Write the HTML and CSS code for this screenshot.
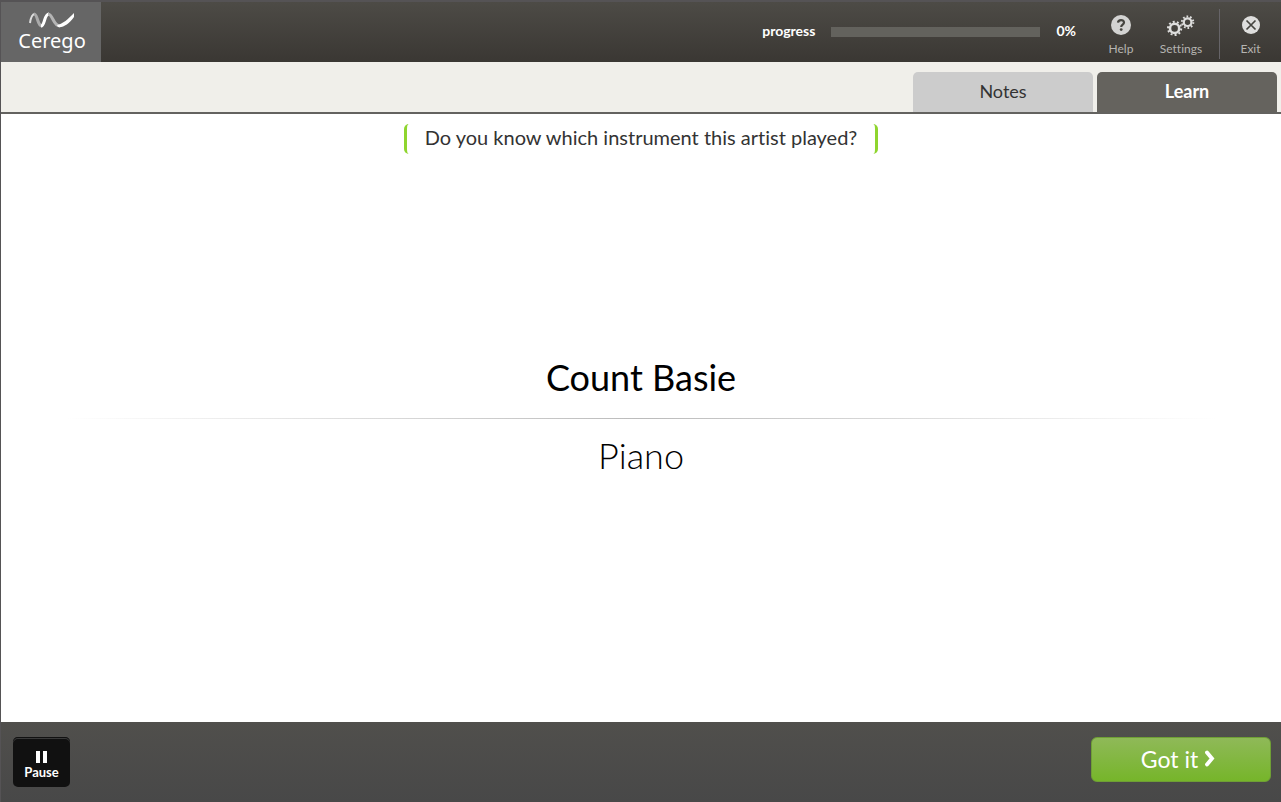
FILE: index.html
```
<!DOCTYPE html>
<html lang="en">
<head>
  <meta charset="UTF-8">
  <meta name="viewport" content="width=device-width, initial-scale=1.0">
  <title>Cerego</title>
  <link rel="stylesheet" href="styles.css">
</head>
<body>
  <header class="topbar">
    <a class="logo" href="#">
      <svg width="46" height="16" viewBox="0 0 46 16" fill="none" aria-hidden="true">
        <path d="M1 11C2 4 4 2 6 2" stroke="#ddd" stroke-width="2"/>
        <path d="M5 2C9 2 8 14 13 14" stroke="#aaa" stroke-width="3"/>
        <path d="M12 14C16 14 15 2 20 2" stroke="#fff" stroke-width="3"/>
        <path d="M19 2C24 2 24 14 31 14" stroke="#b4b4b4" stroke-width="3"/>
        <path d="M28 13C34 12 39 7 45 1V5C40 12 34 16 29 15Z" fill="#fff"/>
      </svg>
      <span>Cerego</span>
    </a>
    <div class="progress">
      <label for="progress">progress</label>
      <progress id="progress" value="0" max="100"></progress>
      <span class="percent">0%</span>
    </div>
    <nav class="tools">
      <a class="tool" href="#">
        <svg width="20" height="20" viewBox="0 0 20 20" aria-hidden="true">
          <circle cx="10" cy="10" r="10" fill="#d3d3d2"/>
          <path d="M7 7.6C7.2 4.2 13 4.2 13 7.6C13 9.6 10.2 9.6 10.2 12" fill="none" stroke="#45443f" stroke-width="2.2"/>
          <circle cx="10.2" cy="14.6" r="1.4" fill="#45443f"/>
        </svg>
        <span>Help</span>
      </a>
      <a class="tool" href="#">
        <svg width="28" height="22" viewBox="0 0 28 22" fill="none" stroke="#dededd" aria-hidden="true">
          <circle cx="7.6" cy="13.4" r="4.6" stroke-width="2.6"/>
          <circle cx="7.6" cy="13.4" r="6.6" stroke-width="2" stroke-dasharray="2 2.147"/>
          <circle cx="20.6" cy="7.2" r="3.8" stroke-width="2.2"/>
          <circle cx="20.6" cy="7.2" r="5.7" stroke-width="2" stroke-dasharray="1.7 1.881"/>
        </svg>
        <span>Settings</span>
      </a>
      <a class="tool exit" href="#">
        <svg width="18" height="18" viewBox="0 0 18 18" aria-hidden="true">
          <circle cx="9" cy="9" r="9" fill="#dededd"/>
          <path d="M4.5 4.5L13.5 13.5M13.5 4.5L4.5 13.5" stroke="#45443f" stroke-width="1.7"/>
        </svg>
        <span>Exit</span>
      </a>
    </nav>
  </header>

  <div class="tabs">
    <button type="button" class="tab">Notes</button>
    <button type="button" class="tab active">Learn</button>
  </div>

  <main class="card">
    <section class="front">
      <p class="question">Do you know which instrument this artist played?</p>
      <h1 class="name">Count Basie</h1>
    </section>
    <hr class="divider">
    <section class="back">
      <p class="answer">Piano</p>
    </section>
  </main>

  <footer class="bottombar">
    <button type="button" class="pause">
      <svg width="11" height="12" viewBox="0 0 11 12" fill="#fff" aria-hidden="true">
        <path d="M0 0H4V12H0ZM7 0H11V12H7Z"/>
      </svg>
      <span>Pause</span>
    </button>
    <button type="button" class="got-it">
      <span>Got it</span>
      <svg width="10" height="17" viewBox="0 0 10 17" fill="none" aria-hidden="true">
        <path d="M2 2.5L7 8.5L2 14.5" stroke="#fff" stroke-width="3.8" stroke-linecap="round"/>
      </svg>
    </button>
  </footer>
</body>
</html>
```
FILE: styles.css
```
* {
  box-sizing: border-box;
}
body {
  display: flex;
  flex-direction: column;
  min-height: 100vh;
  margin: 0;
  border-top: 2px solid #555355;
  border-left: 1px solid #555355;
  background-color: white;
  font-family: Lato, "Open Sans", sans-serif;
  font-variant-ligatures: none;
}
a {
  text-decoration: none;
}
button {
  border: none;
  font-family: inherit;
  font-variant-ligatures: none;
  cursor: pointer;
}

/* top bar */
.topbar {
  display: flex;
  align-items: stretch;
  height: 60px;
  background: linear-gradient(#4d4b46, #3a3733);
}
.logo {
  display: flex;
  flex-direction: column;
  align-items: center;
  width: 100px;
  margin-right: auto;
  padding: 10px 0 0 2px;
  background-color: #666;
  color: white;
  font-family: "Noto Sans", sans-serif;
  font-size: 20px;
  line-height: 26px;
}
.progress {
  display: flex;
  align-items: center;
  gap: 16px;
  margin-right: 15px;
  color: white;
  font-size: 14px;
  font-weight: bold;
}
.progress label,
.percent {
  padding-bottom: 3px;
}
progress {
  appearance: none;
  width: 209px;
  height: 10px;
  border: none;
  background-color: #63625d;
}
progress::-webkit-progress-bar {
  background-color: #63625d;
}
progress::-webkit-progress-value {
  background-color: #8fd52f;
}
.tools {
  display: flex;
}
.tool {
  display: flex;
  flex-direction: column;
  align-items: center;
  justify-content: space-between;
  width: 60px;
  padding: 13px 0 5px;
  color: #b5b4b1;
  font-size: 12px;
  line-height: 16px;
}
.tool svg {
  margin-bottom: auto;
}
.exit {
  width: 62px;
  margin: 7px 0 3px 8px;
  padding: 7px 0 2px;
  border-left: 1px solid #666468;
}

/* tabs */
.tabs {
  display: flex;
  justify-content: flex-end;
  gap: 4px;
  padding: 10px 4px 0;
  border-bottom: 2px solid #63625f;
  background-color: #f0efea;
}
.tab {
  width: 180px;
  height: 40px;
  padding: 0 0 3px;
  border-radius: 5px 5px 0 0;
  background-color: #ccc;
  color: #333;
  font-size: 18px;
}
.tab.active {
  background-color: #65635e;
  color: white;
  font-weight: bold;
}

/* card */
.card {
  flex: 1;
  display: grid;
  grid-template-rows: 1fr auto 1fr;
}
.front {
  display: flex;
  flex-direction: column;
  align-items: center;
  justify-content: space-between;
  padding: 10px 0 21px;
}
.question {
  margin: 0;
  padding: 0 18px 3px;
  border: solid #8fd52f;
  border-width: 0 3px;
  border-radius: 5px;
  color: #333;
  font-size: 20px;
  line-height: 27px;
}
.name,
.answer {
  margin: 0;
  color: black;
  font-size: 36px;
  font-weight: normal;
  line-height: 40px;
  text-align: center;
}
.answer {
  font-weight: 300;
}
.divider {
  width: 90%;
  height: 1px;
  margin: 0 auto;
  border: none;
  background: linear-gradient(to right, transparent, #bbb 50%, transparent);
}
.back {
  padding-top: 16px;
}

/* bottom bar */
.bottombar {
  display: flex;
  align-items: flex-start;
  justify-content: space-between;
  height: 80px;
  padding: 15px 10px 0 12px;
  background: linear-gradient(#504f4c, #484848);
}
.pause {
  display: flex;
  flex-direction: column;
  align-items: center;
  gap: 1px;
  width: 57px;
  height: 50px;
  padding: 14px 0 0;
  border-radius: 5px;
  background-color: #111;
  box-shadow: inset 0 1px #111, inset 0 2px #3a3a3a;
  color: white;
  font-size: 13px;
  font-weight: bold;
  line-height: 16px;
}
.got-it {
  display: flex;
  align-items: center;
  justify-content: center;
  gap: 7px;
  width: 180px;
  height: 45px;
  padding: 0 6px 2px 0;
  border: 1px solid #6f9f35;
  border-radius: 6px;
  background: linear-gradient(#8fb958, #76b52a);
  color: white;
  font-size: 23px;
}
```
